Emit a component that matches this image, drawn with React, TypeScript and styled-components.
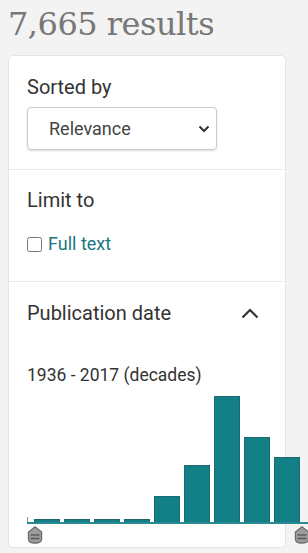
import React from 'react';
import styled, { createGlobalStyle } from 'styled-components';

const GlobalStyle = createGlobalStyle`
  html, body {
    margin: 0;
    padding: 0;
    background: #f3f3f3;
  }
  body {
    font-family: Roboto, "Liberation Sans", Arial, sans-serif;
    color: #333;
  }
`;

const Page = styled.div`
  width: 308px;
  height: 553px;
  padding: 0 8px;
  box-sizing: border-box;
  overflow: hidden;
`;

const Title = styled.h1`
  margin: 0;
  padding-top: 5px;
  height: 55px;
  font-family: "DejaVu Serif", "Liberation Serif", serif;
  font-weight: normal;
  font-size: 32px;
  line-height: 38px;
  color: #777;
  letter-spacing: -0.5px;
  box-sizing: border-box;
`;

const Card = styled.div`
  width: 278px;
  background: #fff;
  border: 1px solid #e5e5e5;
  border-radius: 5px;
  box-sizing: border-box;
`;

const Section = styled.div<{ $top?: number; $last?: boolean }>`
  padding: ${p => p.$top ?? 19}px 0 0 18px;
  border-bottom: ${p => (p.$last ? 'none' : '1px solid #ebebeb')};
`;

const Heading = styled.div`
  font-size: 20px;
  line-height: 24px;
  color: #333;
`;

const HeaderRow = styled.div`
  display: flex;
  align-items: center;
  justify-content: space-between;
  padding-right: 26px;
`;

const SelectBox = styled.div`
  margin: 8px 0 19px;
  width: 190px;
  height: 43px;
  border: 1px solid #ccc;
  border-radius: 4px;
  box-shadow: 0 1px 2px rgba(0, 0, 0, 0.15);
  display: flex;
  align-items: center;
  justify-content: space-between;
  padding: 0 6px 0 21px;
  box-sizing: border-box;
  font-size: 18px;
  color: #444;
`;

const CheckRow = styled.label`
  display: flex;
  align-items: center;
  gap: 6px;
  margin: 20px 0 0;
  padding-bottom: 25px;
  font-size: 18px;
  line-height: 24px;
  color: #1a7680;
`;

const Check = styled.input`
  margin: 0;
  width: 15px;
  height: 15px;
`;

const RangeLabel = styled.div`
  margin-top: 38px;
  font-size: 17.5px;
  line-height: 24px;
  color: #333;
`;

const Chart = styled.div`
  position: relative;
  height: 160px;
`;

const Bars = styled.div`
  display: flex;
  align-items: flex-end;
  gap: 4px;
  height: 135px;
  padding-left: 7px;
  width: 320px;
  border-bottom: 2px solid #2b8a90;
`;

const Bar = styled.div`
  width: 26px;
  flex: none;
  background: #137f87;
  border: 1px solid #1c6a70;
  border-bottom: none;
  box-sizing: border-box;
`;

const Tick = styled.div`
  position: absolute;
  left: 0;
  top: 130px;
  width: 1px;
  height: 5px;
  background: #888;
`;

const Handle = styled.div<{ $left: number }>`
  position: absolute;
  top: 139px;
  left: ${p => p.$left}px;
  width: 16px;
  height: 18px;
`;

const counts = [3, 3, 3, 3, 26, 57, 126, 85, 65];

const HandleIcon = () => (
  <svg width="16" height="18" viewBox="0 0 16 18">
    <path
      d="M8 0.8 L14.6 6 L14.6 13 Q14.6 17.2 8 17.2 Q1.4 17.2 1.4 13 L1.4 6 Z"
      fill="#9b9b9b"
      stroke="#6a6a6a"
      strokeWidth="1.2"
    />
    <line x1="3.5" y1="9" x2="12.5" y2="9" stroke="#555" strokeWidth="1.3" />
    <line x1="3.5" y1="12.5" x2="12.5" y2="12.5" stroke="#555" strokeWidth="1.3" />
  </svg>
);

const App = () => (
  <Page>
    <GlobalStyle />
    <Title>7,665 results</Title>
    <Card>
      <Section>
        <Heading>Sorted by</Heading>
        <SelectBox>
          <span>Relevance</span>
          <svg width="12" height="8" viewBox="0 0 12 8">
            <polyline points="1.5,1.5 6,6 10.5,1.5" fill="none" stroke="#333" strokeWidth="2" />
          </svg>
        </SelectBox>
      </Section>
      <Section $top={18}>
        <Heading>Limit to</Heading>
        <CheckRow>
          <Check type="checkbox" />
          Full text
        </CheckRow>
      </Section>
      <Section $last>
        <HeaderRow>
          <Heading>Publication date</Heading>
          <svg width="18" height="11" viewBox="0 0 18 11">
            <polyline points="1.5,9.5 9,2 16.5,9.5" fill="none" stroke="#333" strokeWidth="2.2" />
          </svg>
        </HeaderRow>
        <RangeLabel>1936 - 2017 (decades)</RangeLabel>
        <Chart>
          <Bars>
            {counts.map((c, i) => (
              <Bar key={i} style={{ height: c }} />
            ))}
          </Bars>
          <Tick />
          <Handle $left={0}>
            <HandleIcon />
          </Handle>
          <Handle $left={267}>
            <HandleIcon />
          </Handle>
        </Chart>
      </Section>
    </Card>
  </Page>
);

export default App;
